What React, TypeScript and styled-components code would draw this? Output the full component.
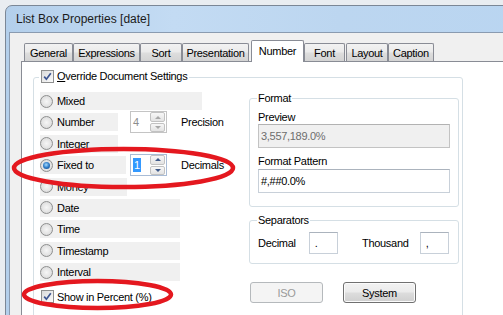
import styled, { createGlobalStyle } from "styled-components";

const GlobalStyle = createGlobalStyle`
  html, body {
    margin: 0;
    padding: 0;
  }
  body {
    background: #e9edf1;
    font-family: "Liberation Sans", Arial, sans-serif;
    font-size: 11px;
    letter-spacing: -0.3px;
    color: #000;
    overflow: hidden;
  }
  * {
    box-sizing: border-box;
  }
`;

const Page = styled.div`
  position: relative;
  width: 503px;
  height: 315px;
  overflow: hidden;
  padding: 5px 0 0 5px;
`;

const Window = styled.div`
  width: 560px;
  height: 340px;
  border: 1px solid #7b8796;
  border-radius: 7px 7px 0 0;
  background: linear-gradient(90deg, #b3cfeb 0%, #c3dbf3 30%, #bcd6f0 60%, #b9d5f1 100%);
  display: flex;
  flex-direction: column;
`;

const TitleBar = styled.div`
  height: 26px;
  line-height: 27px;
  padding-left: 10px;
  font-size: 12px;
  letter-spacing: 0;
  color: #1b1b1b;
`;

const Client = styled.div`
  flex: 1;
  margin-left: 3px;
  border-top: 1px solid #8a9bb0;
  border-left: 1px solid #8a9bb0;
  background: #f0f0f0;
  padding: 7px 0 0 11px;
  display: flex;
  flex-direction: column;
`;

const TabStrip = styled.div`
  display: flex;
  align-items: flex-end;
  height: 21px;
  padding-left: 3px;
  position: relative;
  z-index: 1;
`;

interface ITab {
  $w: number;
  $ml: number;
  $active?: boolean;
}

const Tab = styled.div<ITab>`
  width: ${(p) => p.$w}px;
  margin-left: ${(p) => p.$ml}px;
  height: ${(p) => (p.$active ? 22 : 18)}px;
  margin-bottom: ${(p) => (p.$active ? -1 : 0)}px;
  border: 1px solid #898c95;
  border-bottom: none;
  border-radius: 2px 2px 0 0;
  background: ${(p) =>
    p.$active ? "#ffffff" : "linear-gradient(#f2f2f2 0%, #ebebeb 45%, #dddddd 55%, #d3d3d3 100%)"};
  display: flex;
  align-items: center;
  justify-content: center;
  padding-bottom: ${(p) => (p.$active ? 2 : 0)}px;
`;

const Panel = styled.div`
  flex: 1;
  border-top: 1px solid #898c95;
  border-left: 1px solid #898c95;
  background: #fff;
  padding: 15px 0 0 11px;
`;

const GroupBox = styled.div`
  width: 430px;
  height: 300px;
  border: 1px solid #d5dfe5;
  border-radius: 3px;
`;

const Legend = styled.div<{ $ml: number }>`
  display: flex;
  width: fit-content;
  align-items: center;
  gap: 3px;
  height: 14px;
  line-height: 14px;
  margin-top: -9px;
  margin-left: ${(p) => p.$ml}px;
  padding: 0 2px;
  background: #fff;
`;

const Body = styled.div`
  display: flex;
`;

const OptionColumn = styled.div`
  width: 209px;
  margin: 9px 0 0 6px;
  display: flex;
  flex-direction: column;
  gap: 3.4px;
`;

const OptionRow = styled.div`
  display: grid;
  grid-template-columns: 90px 37px auto;
  align-items: center;
  height: 18px;
`;

const Option = styled.div<{ $w: number; $wide?: boolean }>`
  width: ${(p) => p.$w}px;
  height: 18px;
  background: #f0f0f0;
  display: flex;
  align-items: center;
  gap: 4px;
  grid-column: ${(p) => (p.$wide ? "1 / -1" : "auto")};
`;

const Radio = styled.span<{ $on?: boolean }>`
  width: 13px;
  height: 13px;
  border-radius: 50%;
  border: 1px solid #8e8f8f;
  background: radial-gradient(circle at 50% 50%, #f6f6f6 0%, #e2e2e2 60%, #cdcdcd 100%);
  display: flex;
  align-items: center;
  justify-content: center;
  flex: none;
  &::after {
    content: "";
    display: ${(p) => (p.$on ? "block" : "none")};
    width: 7px;
    height: 7px;
    border-radius: 50%;
    background: radial-gradient(circle at 45% 40%, #a6dcff 0%, #2f7cc7 50%, #0b3d7a 100%);
  }
`;

const CheckBox = styled.span`
  width: 13px;
  height: 13px;
  border: 1px solid #8e8f8f;
  background: linear-gradient(135deg, #dadada, #fbfbfb);
  display: flex;
  align-items: center;
  justify-content: center;
  flex: none;
`;

const Spin = styled.div<{ $focus?: boolean }>`
  width: 37px;
  height: 22px;
  margin: -2px 0;
  border: 1px solid ${(p) => (p.$focus ? "#a9bcd6" : "#c4c4c4")};
  background: #fff;
  display: flex;
`;

const SpinValue = styled.div<{ $disabled?: boolean }>`
  flex: 1;
  padding-left: 2px;
  display: flex;
  align-items: center;
  color: ${(p) => (p.$disabled ? "#8d8d8d" : "#000")};
`;

const Selected = styled.span`
  background: #3399ff;
  color: #fff;
  padding: 0 1px;
  line-height: 14px;
`;

const SpinButtons = styled.div`
  width: 16px;
  display: flex;
  flex-direction: column;
  gap: 1px;
  padding: 0 1px 0 0;
`;

const SpinButton = styled.div`
  flex: 1;
  border: 1px solid #c2c2c2;
  border-radius: 2px;
  background: linear-gradient(#f7f7f7, #e3e3e3);
  display: flex;
  align-items: center;
  justify-content: center;
`;

const Arrow = styled.span<{ $down?: boolean; $disabled?: boolean }>`
  width: 0;
  height: 0;
  border-left: 3px solid transparent;
  border-right: 3px solid transparent;
  ${(p) => (p.$down ? "border-top" : "border-bottom")}: 3px solid ${(p) => (p.$disabled ? "#a8a8a8" : "#3f5a8a")};
`;

const SideLabel = styled.span`
  margin-left: 14px;
`;

const PercentRow = styled.div`
  display: flex;
  align-items: center;
  gap: 3px;
  height: 14px;
  margin: 5px 0 0 1px;
`;

const RightColumn = styled.div`
  width: 210px;
  margin-top: 15px;
`;

const SubGroup = styled.div<{ $h: number; $mt?: number }>`
  height: ${(p) => p.$h}px;
  margin-top: ${(p) => p.$mt ?? 0}px;
  border: 1px solid #d5dfe5;
  border-radius: 3px;
`;

const SubLegend = styled.div`
  width: fit-content;
  height: 14px;
  line-height: 14px;
  margin: -8px 0 0 7px;
  padding: 0 1px;
  background: #fff;
`;

const SubBody = styled.div`
  padding-left: 8px;
`;

const FieldLabel = styled.div<{ $mt: number }>`
  height: 14px;
  line-height: 14px;
  margin-top: ${(p) => p.$mt}px;
`;

const TextBox = styled.div<{ $w: number; $h?: number; $disabled?: boolean; $mt?: number }>`
  width: ${(p) => p.$w}px;
  height: ${(p) => p.$h ?? 24}px;
  margin-top: ${(p) => p.$mt ?? 0}px;
  border: 1px solid ${(p) => (p.$disabled ? "#c3c3c3" : "#c8d0d9")};
  border-top-color: ${(p) => (p.$disabled ? "#b2b2b2" : "#abb3bd")};
  background: ${(p) => (p.$disabled ? "#f0f0f0" : "#fff")};
  color: ${(p) => (p.$disabled ? "#6d6d6d" : "#000")};
  padding-left: 2px;
  display: flex;
  align-items: center;
`;

const SepRow = styled.div`
  display: flex;
  align-items: center;
  margin-top: 5px;
`;

const SepLabel = styled.span<{ $w: number; $ml?: number }>`
  width: ${(p) => p.$w}px;
  margin-left: ${(p) => p.$ml ?? 0}px;
`;

const ButtonRow = styled.div`
  display: flex;
  gap: 20px;
  margin: 18px 0 0 1px;
`;

const Button = styled.div<{ $disabled?: boolean }>`
  width: 73px;
  height: 21px;
  border: 1px solid ${(p) => (p.$disabled ? "#b5b9bc" : "#707070")};
  border-radius: 3px;
  background: ${(p) =>
    p.$disabled ? "#f4f4f4" : "linear-gradient(#f2f2f2 0%, #ebebeb 48%, #dddddd 52%, #cfcfcf 100%)"};
  box-shadow: ${(p) => (p.$disabled ? "none" : "inset 0 0 0 1px #fbfbfb")};
  color: ${(p) => (p.$disabled ? "#9a9a9a" : "#000")};
  display: flex;
  align-items: center;
  justify-content: center;
`;

const Annotations = styled.svg`
  position: absolute;
  left: 0;
  top: 0;
  pointer-events: none;
`;

const tabs = [
  { label: "General", w: 49, ml: 0 },
  { label: "Expressions", w: 67, ml: 0 },
  { label: "Sort", w: 42, ml: 0 },
  { label: "Presentation", w: 67, ml: 0 },
  { label: "Number", w: 53, ml: 2, active: true },
  { label: "Font", w: 41, ml: 0 },
  { label: "Layout", w: 42, ml: 1 },
  { label: "Caption", w: 46, ml: 0 },
];

interface IOption {
  label: string;
  w: number;
  checked?: boolean;
  spin?: { value: string; focus?: boolean; side: string };
}

const options: IOption[] = [
  { label: "Mixed", w: 162 },
  { label: "Number", w: 78, spin: { value: "4", side: "Precision" } },
  { label: "Integer", w: 78 },
  { label: "Fixed to", w: 86, checked: true, spin: { value: "1", focus: true, side: "Decimals" } },
  { label: "Money", w: 87 },
  { label: "Date", w: 140 },
  { label: "Time", w: 140 },
  { label: "Timestamp", w: 140 },
  { label: "Interval", w: 140 },
];

const Check = () => (
  <svg width="11" height="11" viewBox="0 0 11 11">
    <path d="M2.2 5.6 L4.4 8.2 L8.8 2.2" fill="none" stroke="#3d5591" strokeWidth="1.7" />
  </svg>
);

const App = () => {
  return (
    <Page>
      <GlobalStyle />
      <Window>
        <TitleBar>List Box Properties [date]</TitleBar>
        <Client>
          <TabStrip>
            {tabs.map((tab) => (
              <Tab key={tab.label} $w={tab.w} $ml={tab.ml} $active={tab.active}>
                {tab.label}
              </Tab>
            ))}
          </TabStrip>
          <Panel>
            <GroupBox>
              <Legend $ml={5}>
                <CheckBox>
                  <Check />
                </CheckBox>
                <span>
                  <u>O</u>verride Document Settings
                </span>
              </Legend>
              <Body>
                <OptionColumn>
                  {options.map((item) => (
                    <OptionRow key={item.label}>
                      <Option $w={item.w} $wide={!item.spin}>
                        <Radio $on={item.checked} />
                        {item.label}
                      </Option>
                      {item.spin && (
                        <>
                          <Spin $focus={item.spin.focus}>
                            <SpinValue $disabled={!item.spin.focus}>
                              {item.spin.focus ? <Selected>{item.spin.value}</Selected> : item.spin.value}
                            </SpinValue>
                            <SpinButtons>
                              <SpinButton>
                                <Arrow $disabled={!item.spin.focus} />
                              </SpinButton>
                              <SpinButton>
                                <Arrow $down $disabled={!item.spin.focus} />
                              </SpinButton>
                            </SpinButtons>
                          </Spin>
                          <SideLabel>{item.spin.side}</SideLabel>
                        </>
                      )}
                    </OptionRow>
                  ))}
                  <PercentRow>
                    <CheckBox>
                      <Check />
                    </CheckBox>
                    Show in Percent (%)
                  </PercentRow>
                </OptionColumn>
                <RightColumn>
                  <SubGroup $h={109}>
                    <SubLegend>Format</SubLegend>
                    <SubBody>
                      <FieldLabel $mt={5}>Preview</FieldLabel>
                      <TextBox $w={192} $disabled>
                        3,557,189.0%
                      </TextBox>
                      <FieldLabel $mt={6}>Format Pattern</FieldLabel>
                      <TextBox $w={192} $mt={1}>
                        #,##0.0%
                      </TextBox>
                    </SubBody>
                  </SubGroup>
                  <SubGroup $h={44} $mt={13}>
                    <SubLegend>Separators</SubLegend>
                    <SubBody>
                      <SepRow>
                        <SepLabel $w={51}>Decimal</SepLabel>
                        <TextBox $w={29} $h={22}>
                          &nbsp;.
                        </TextBox>
                        <SepLabel $w={58} $ml={24}>
                          Thousand
                        </SepLabel>
                        <TextBox $w={29} $h={22}>
                          &nbsp;,
                        </TextBox>
                      </SepRow>
                    </SubBody>
                  </SubGroup>
                  <ButtonRow>
                    <Button $disabled>ISO</Button>
                    <Button>System</Button>
                  </ButtonRow>
                </RightColumn>
              </Body>
            </GroupBox>
          </Panel>
        </Client>
      </Window>
      <Annotations width="503" height="315" viewBox="0 0 503 315">
        <ellipse cx="123.5" cy="168" rx="109.5" ry="19" fill="none" stroke="#e4181f" strokeWidth="4.5" />
        <ellipse cx="97.5" cy="294.5" rx="73.5" ry="13.5" fill="none" stroke="#e4181f" strokeWidth="4.5" />
      </Annotations>
    </Page>
  );
};

export default App;
